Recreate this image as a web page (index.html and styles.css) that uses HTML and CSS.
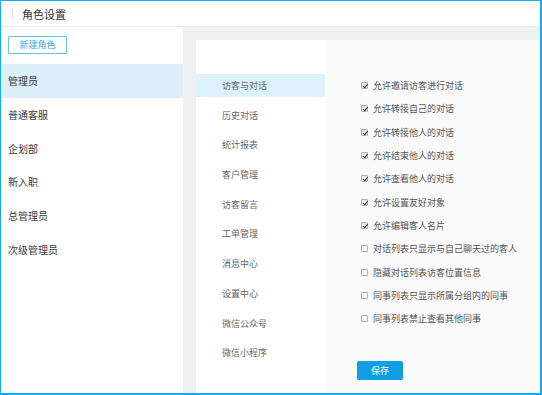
FILE: index.html
```html
<!DOCTYPE html>
<html lang="zh-CN">
<head>
    <meta charset="UTF-8">
    <title>角色设置</title>
    <link rel="stylesheet" href="styles.css">
</head>
<body>
    <div class="app">
        <div class="header">
            <span class="header-divider"></span>
            <span class="header-title">角色设置</span>
        </div>
        <div class="body">
            <div class="sidebar">
                <div class="sidebar-top">
                    <button class="new-btn">新建角色</button>
                </div>
                <div class="role active">管理员</div>
                <div class="role">普通客服</div>
                <div class="role">企划部</div>
                <div class="role">新入职</div>
                <div class="role">总管理员</div>
                <div class="role">次级管理员</div>
            </div>
            <div class="main">
                <div class="panel">
                    <div class="nav">
                        <div class="nav-item active">访客与对话</div>
                        <div class="nav-item">历史对话</div>
                        <div class="nav-item">统计报表</div>
                        <div class="nav-item">客户管理</div>
                        <div class="nav-item">访客留言</div>
                        <div class="nav-item">工单管理</div>
                        <div class="nav-item">消息中心</div>
                        <div class="nav-item">设置中心</div>
                        <div class="nav-item">微信公众号</div>
                        <div class="nav-item">微信小程序</div>
                    </div>
                    <div class="perms">
                        <div class="perm"><span class="check checked"></span>允许邀请访客进行对话</div>
                        <div class="perm"><span class="check checked"></span>允许转接自己的对话</div>
                        <div class="perm"><span class="check checked"></span>允许转接他人的对话</div>
                        <div class="perm"><span class="check checked"></span>允许结束他人的对话</div>
                        <div class="perm"><span class="check checked"></span>允许查看他人的对话</div>
                        <div class="perm"><span class="check checked"></span>允许设置友好对象</div>
                        <div class="perm"><span class="check checked"></span>允许编辑客人名片</div>
                        <div class="perm"><span class="check"></span>对话列表只显示与自己聊天过的客人</div>
                        <div class="perm"><span class="check"></span>隐藏对话列表访客位置信息</div>
                        <div class="perm"><span class="check"></span>同事列表只显示所属分组内的同事</div>
                        <div class="perm"><span class="check"></span>同事列表禁止查看其他同事</div>
                        <button class="save-btn">保存</button>
                    </div>
                </div>
            </div>
        </div>
    </div>
</body>
</html>
```

FILE: styles.css
```css
* {
    margin: 0;
    padding: 0;
    box-sizing: border-box;
}

html, body {
    width: 542px;
    height: 395px;
    overflow: hidden;
}

body {
    font-family: "Noto Sans CJK SC", "Noto Sans", sans-serif;
    background: #FFFFFF;
    color: #333333;
}

.app {
    width: 542px;
    height: 395px;
    border-style: solid;
    border-color: #12ACEF;
    border-width: 1px 2px 2px 1px;
    display: flex;
    flex-direction: column;
}

.header {
    height: 26px;
    flex-shrink: 0;
    border-bottom: 1px solid #ECECEC;
    display: flex;
    align-items: center;
    padding-left: 11px;
}

.header-divider {
    width: 1px;
    height: 11px;
    background: #E2E2E2;
    margin-right: 9px;
}

.header-title {
    font-size: 11px;
    color: #333333;
}

.body {
    flex: 1;
    display: flex;
    min-height: 0;
}

.sidebar {
    width: 182px;
    flex-shrink: 0;
    background: #FFFFFF;
}

.sidebar-top {
    padding: 9px 0 10px 7px;
}

.new-btn {
    display: block;
    width: 59px;
    height: 18px;
    border: 1px solid #6BBFEE;
    background: #FFFFFF;
    color: #3DA2DF;
    font-family: inherit;
    font-size: 9px;
    line-height: 16px;
    border-radius: 1px;
}

.role {
    height: 33.7px;
    display: flex;
    align-items: center;
    padding-left: 7px;
    font-size: 10px;
    color: #3A3A3A;
}

.role.active {
    background: #DCEEFA;
}

.main {
    flex: 1;
    background: #EFF0F2;
    padding: 13px 0 0 13px;
    display: flex;
}

.panel {
    flex: 1;
    display: flex;
    background: #FFFFFF;
}

.nav {
    width: 129px;
    flex-shrink: 0;
    padding-top: 34px;
}

.nav-item {
    height: 23px;
    margin-bottom: 6.7px;
    display: flex;
    align-items: center;
    padding-left: 26px;
    font-size: 9px;
    color: #666666;
}

.nav-item.active {
    background: #DDF2FC;
}

.perms {
    flex: 1;
    background: #FAFAFA;
    padding: 34px 0 0 36px;
}

.perm {
    height: 23.3px;
    display: flex;
    align-items: center;
    font-size: 9px;
    color: #555555;
}

.check {
    width: 7px;
    height: 7px;
    border: 1px solid #B5B5B5;
    background: #F6F6F6;
    border-radius: 1px;
    margin-right: 5px;
    position: relative;
}

.check.checked {
    background: #E6E6E6;
}

.check.checked::after {
    content: '';
    position: absolute;
    left: 1.5px;
    top: 0;
    width: 2px;
    height: 3.5px;
    border-right: 1.3px solid #333333;
    border-bottom: 1.3px solid #333333;
    transform: rotate(40deg);
}

.save-btn {
    display: block;
    margin-top: 31px;
    margin-left: -4px;
    width: 46px;
    height: 19px;
    background: #0F9EE3;
    border: none;
    border-radius: 2px;
    color: #FFFFFF;
    font-family: inherit;
    font-size: 9px;
}
```
